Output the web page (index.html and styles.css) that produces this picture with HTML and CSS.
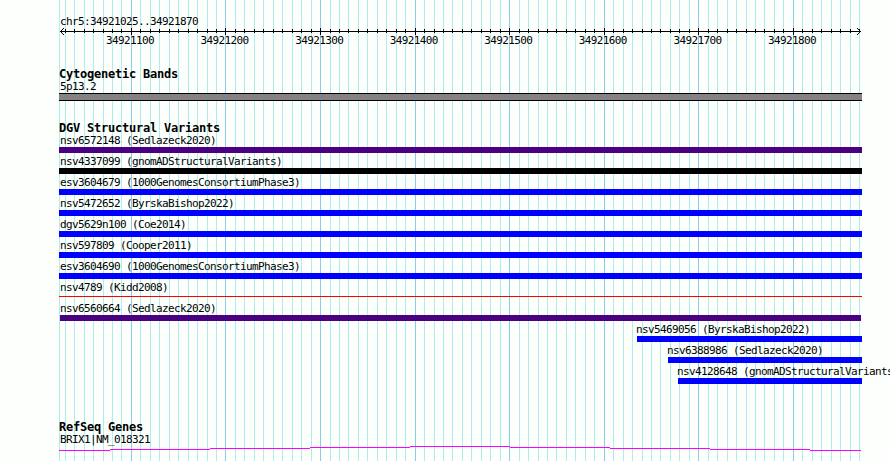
FILE: index.html
```html
<!DOCTYPE html>
<html lang="en">
<head>
<meta charset="utf-8">
<title>chr5:34921025..34921870</title>
<link rel="stylesheet" href="styles.css">
</head>
<body>
<svg class="grid" width="890" height="461" shape-rendering="crispEdges" aria-hidden="true">
  <path id="minor-lines" class="minor"/>
  <path id="major-lines" class="major"/>
</svg>
<main class="browser">
  <header class="ruler">
    <div class="label">chr5:34921025..34921870</div>
    <svg class="axis" width="890" height="7" shape-rendering="crispEdges" aria-hidden="true">
      <path d="M60 3.5H861"/>
      <path d="M61.5 2v3M62.5 1v1M62.5 5v1M63.5 0v1M63.5 6v1M859.5 2v3M858.5 1v1M858.5 5v1M857.5 0v1M857.5 6v1"/>
      <path id="ticks"/>
    </svg>
    <div class="numbers">
      <span>34921100</span><span>34921200</span><span>34921300</span><span>34921400</span><span>34921500</span><span>34921600</span><span>34921700</span><span>34921800</span>
    </div>
  </header>

  <section class="track bands">
    <h2>Cytogenetic Bands</h2>
    <div class="label">5p13.2</div>
    <div class="band"></div>
  </section>

  <section class="track variants">
    <h2>DGV Structural Variants</h2>
    <div class="row"><div class="label">nsv6572148 (Sedlazeck2020)</div><div class="bar indigo"></div></div>
    <div class="row"><div class="label">nsv4337099 (gnomADStructuralVariants)</div><div class="bar black"></div></div>
    <div class="row"><div class="label">esv3604679 (1000GenomesConsortiumPhase3)</div><div class="bar"></div></div>
    <div class="row"><div class="label">nsv5472652 (ByrskaBishop2022)</div><div class="bar"></div></div>
    <div class="row"><div class="label">dgv5629n100 (Coe2014)</div><div class="bar"></div></div>
    <div class="row"><div class="label">nsv597809 (Cooper2011)</div><div class="bar"></div></div>
    <div class="row"><div class="label">esv3604690 (1000GenomesConsortiumPhase3)</div><div class="bar"></div></div>
    <div class="row"><div class="label">nsv4789 (Kidd2008)</div><div class="bar thin"></div></div>
    <div class="row"><div class="label">nsv6560664 (Sedlazeck2020)</div><div class="bar indigo inset"></div></div>
    <div class="row from-637"><div class="label">nsv5469056 (ByrskaBishop2022)</div><div class="bar"></div></div>
    <div class="row from-668"><div class="label">nsv6388986 (Sedlazeck2020)</div><div class="bar"></div></div>
    <div class="row from-678"><div class="label">nsv4128648 (gnomADStructuralVariants)</div><div class="bar"></div></div>
  </section>

  <section class="track genes">
    <h2>RefSeq Genes</h2>
    <div class="label">BRIX1|NM_018321</div>
    <svg class="intron" width="890" height="5" shape-rendering="crispEdges" aria-hidden="true">
      <path d="M59 4.5H110M110 3.5H210M210 2.5H310M310 1.5H410M410 .5H510M510 1.5H610M610 2.5H710M710 3.5H810M810 4.5H861"/>
    </svg>
  </section>
</main>
<script src="script.js"></script>
</body>
</html>
```
FILE: styles.css
```css
body {
  margin: 0;
  background: #fdfffc;
  color: #000;
  font: 11px/13px "DejaVu Sans Mono", monospace;
  letter-spacing: -0.622px;
  overflow: hidden;
}

svg {
  display: block;
  fill: none;
}

/* The grid lies behind every track. */
.grid {
  position: absolute;
  top: 0;
  left: 0;
  z-index: -1;
}

.minor { stroke: #afeeee; }
.major { stroke: #87ceeb; }

.browser {
  box-sizing: border-box;
  width: 890px;
  height: 461px;
  padding-top: 15px;
  overflow: hidden;
}

.label {
  height: 13px;
  padding-left: 60px;
  white-space: nowrap;
}

.ruler {
  height: 53px;
}

.axis {
  stroke: #000;
}

.numbers {
  display: flex;
  justify-content: space-between;
  width: 710px;
  margin: -1px 0 0 106px;
}

.numbers span {
  width: 48px;
}

h2 {
  height: 12px;
  margin: 0;
  padding-left: 59px;
  font-size: 12px;
  line-height: 12px;
  font-weight: bold;
  letter-spacing: -0.224px;
}

.bands {
  height: 54px;
}

.band {
  box-sizing: border-box;
  width: 803px;
  height: 8px;
  margin-left: 59px;
  border: solid #000;
  border-width: 1px 0;
  background: #848284;
}

.variants {
  height: 299px;
}

.row {
  height: 21px;
}

.bar {
  height: 6px;
  margin: 0 28px 0 59px;
  background: #00f;
}

.indigo { background: #4b0082; }
.black { background: #000; }

.thin {
  height: 1px;
  margin-top: 2px;
  background: #f00;
}

.inset {
  margin-left: 60px;
  margin-right: 29px;
}

.from-637 .label { padding-left: 636px; }
.from-637 .bar { margin-left: 637px; }
.from-668 .label { padding-left: 667px; }
.from-668 .bar { margin-left: 668px; }
.from-678 .label { padding-left: 677px; }
.from-678 .bar { margin-left: 678px; }

.intron {
  stroke: #f0f;
}
```
FILE: script.js
```js
// Map base positions to pixels: 846 bases over 800 pixels.
const start = 34921025;
const end = 34921870;
const scale = 800 / 846;
let minor = "M59.5 0V461";
let major = "";
let ticks = "";

for (let base = start + 5; base <= end; base += 10) {
  const x = Math.round(60 + (base - start) * scale) + 0.5;
  if (base % 100 === 0) {
    major += `M${x} 0V461`;
    ticks += `M${x} 0V7`;
  } else {
    minor += `M${x} 0V461`;
    ticks += `M${x} 1V5`;
  }
}

document.getElementById("minor-lines").setAttribute("d", minor);
document.getElementById("major-lines").setAttribute("d", major);
document.getElementById("ticks").setAttribute("d", ticks);
```
